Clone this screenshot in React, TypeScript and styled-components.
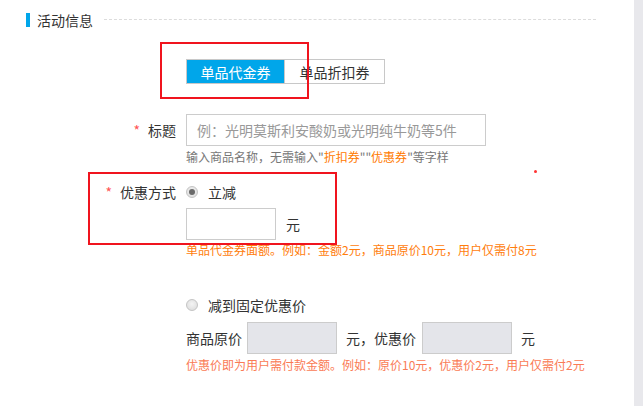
import React from "react";
import styled, { createGlobalStyle } from "styled-components";

const Global = createGlobalStyle`
  html, body { margin: 0; padding: 0; background: #fff; }
  body { font-family: "Noto Sans CJK SC", "Liberation Sans", sans-serif; color: #333; }
  * { box-sizing: border-box; }
`;

const Page = styled.div`
  display: flex;
  width: 643px;
  height: 406px;
  overflow: hidden;
`;

const Main = styled.div`
  position: relative;
  flex: 1;
  display: flex;
  flex-direction: column;
`;

const Scroll = styled.div`
  width: 9px;
  background: #e8e8ec;
`;

const Header = styled.div`
  display: flex;
  align-items: center;
  height: 16px;
  margin-top: 12px;
  padding-left: 26px;
  padding-right: 38px;
`;

const Bar = styled.span`
  width: 4px;
  height: 14px;
  background: #00a6ea;
  margin-right: 7px;
`;

const HeaderTitle = styled.span`
  font-size: 14px;
  line-height: 16px;
  color: #333;
`;

const Dash = styled.span`
  flex: 1;
  margin-left: 11px;
  border-top: 1px dashed #dcdcdc;
  margin-top: -2px;
`;

const Tabs = styled.div`
  display: flex;
  margin: 31px 0 0 186px;
`;

const Tab = styled.div<{ $active?: boolean }>`
  width: ${(p) => (p.$active ? "99px" : "100px")};
  height: 25px;
  display: flex;
  align-items: center;
  justify-content: center;
  font-size: 14px;
  border: 1px solid #c8c8c8;
  border-left-width: ${(p) => (p.$active ? "1px" : "0")};
  background: ${(p) => (p.$active ? "#00a6ea" : "#fff")};
  color: ${(p) => (p.$active ? "#fff" : "#333")};
`;

const Row = styled.div<{ $top: number }>`
  display: grid;
  grid-template-columns: 176px 1fr;
  column-gap: 10px;
  margin-top: ${(p) => p.$top}px;
  align-items: start;
`;

const Label = styled.div<{ $h: number }>`
  display: flex;
  align-items: center;
  justify-content: flex-end;
  height: ${(p) => p.$h}px;
  font-size: 14px;
  color: #333;
`;

const Star = styled.span`
  color: #f55;
  margin-right: 8px;
  font-size: 14px;
`;

const Field = styled.div`
  display: flex;
  flex-direction: column;
`;

const TextInput = styled.div`
  width: 300px;
  height: 32px;
  border: 1px solid #ccc;
  display: flex;
  align-items: center;
  padding-left: 10px;
  font-size: 14px;
  color: #999;
`;

const Hint = styled.div<{ $color?: string; $top: number }>`
  font-size: 12px;
  line-height: 16px;
  color: ${(p) => p.$color || "#777"};
  margin-top: ${(p) => p.$top}px;
  white-space: nowrap;
`;

const Em = styled.span`
  color: #ff7a00;
`;

const RadioLine = styled.div<{ $top?: number }>`
  display: flex;
  align-items: center;
  height: 20px;
  margin-top: ${(p) => p.$top || 0}px;
  font-size: 14px;
  color: #333;
`;

const Radio = styled.span<{ $on?: boolean }>`
  width: 12px;
  height: 12px;
  border-radius: 50%;
  border: 1px solid #c4c4c4;
  background: radial-gradient(circle at 50% 40%, #f4f4f4, #d9d9d9);
  display: flex;
  align-items: center;
  justify-content: center;
  margin-right: 10px;
  &::after {
    content: "";
    display: ${(p) => (p.$on ? "block" : "none")};
    width: 6px;
    height: 6px;
    border-radius: 50%;
    background: #6a6a6a;
  }
`;

const InputLine = styled.div<{ $top: number }>`
  display: flex;
  align-items: center;
  margin-top: ${(p) => p.$top}px;
  font-size: 14px;
  color: #333;
`;

const Box = styled.div<{ $filled?: boolean }>`
  width: 90px;
  height: 32px;
  border: 1px solid #ccc;
  background: ${(p) => (p.$filled ? "#e4e5ea" : "#fff")};
`;

const Text = styled.span<{ $l?: number; $r?: number }>`
  margin-left: ${(p) => p.$l || 0}px;
  margin-right: ${(p) => p.$r || 0}px;
  white-space: nowrap;
`;

const Mark = styled.div<{ $x: number; $y: number; $w: number; $h: number }>`
  position: absolute;
  left: ${(p) => p.$x}px;
  top: ${(p) => p.$y}px;
  width: ${(p) => p.$w}px;
  height: ${(p) => p.$h}px;
  border: 2px solid #f0141e;
  pointer-events: none;
`;

const Dot = styled.div`
  position: absolute;
  left: 534px;
  top: 170px;
  width: 3px;
  height: 3px;
  background: #f33;
  border-radius: 50%;
`;

export default function App() {
  return (
    <Page>
      <Global />
      <Main>
        <Header>
          <Bar />
          <HeaderTitle>活动信息</HeaderTitle>
          <Dash />
        </Header>

        <Tabs>
          <Tab $active>单品代金券</Tab>
          <Tab>单品折扣券</Tab>
        </Tabs>

        <Row $top={30}>
          <Label $h={32}>
            <Star>*</Star>标题
          </Label>
          <Field>
            <TextInput>例：光明莫斯利安酸奶或光明纯牛奶等5件</TextInput>
            <Hint $top={3}>
              输入商品名称，无需输入"<Em>折扣券</Em>""<Em>优惠券</Em>"等字样
            </Hint>
          </Field>
        </Row>

        <Row $top={17}>
          <Label $h={20}>
            <Star>*</Star>优惠方式
          </Label>
          <Field>
            <RadioLine>
              <Radio $on />
              立减
            </RadioLine>
            <InputLine $top={6}>
              <Box />
              <Text $l={10}>元</Text>
            </InputLine>
            <Hint $top={2} $color="#ff7d0d">
              单品代金券面额。例如：金额2元，商品原价10元，用户仅需付8元
            </Hint>
            <RadioLine $top={37}>
              <Radio />
              减到固定优惠价
            </RadioLine>
            <InputLine $top={7}>
              <Text $r={5}>商品原价</Text>
              <Box $filled />
              <Text $l={9} $r={6}>元，优惠价</Text>
              <Box $filled />
              <Text $l={9}>元</Text>
            </InputLine>
            <Hint $top={3} $color="#fa7b55">
              优惠价即为用户需付款金额。例如：原价10元，优惠价2元，用户仅需付2元
            </Hint>
          </Field>
        </Row>

        <Mark $x={160} $y={42} $w={149} $h={57} />
        <Mark $x={88} $y={172} $w={249} $h={73} />
        <Dot />
      </Main>
      <Scroll />
    </Page>
  );
}
